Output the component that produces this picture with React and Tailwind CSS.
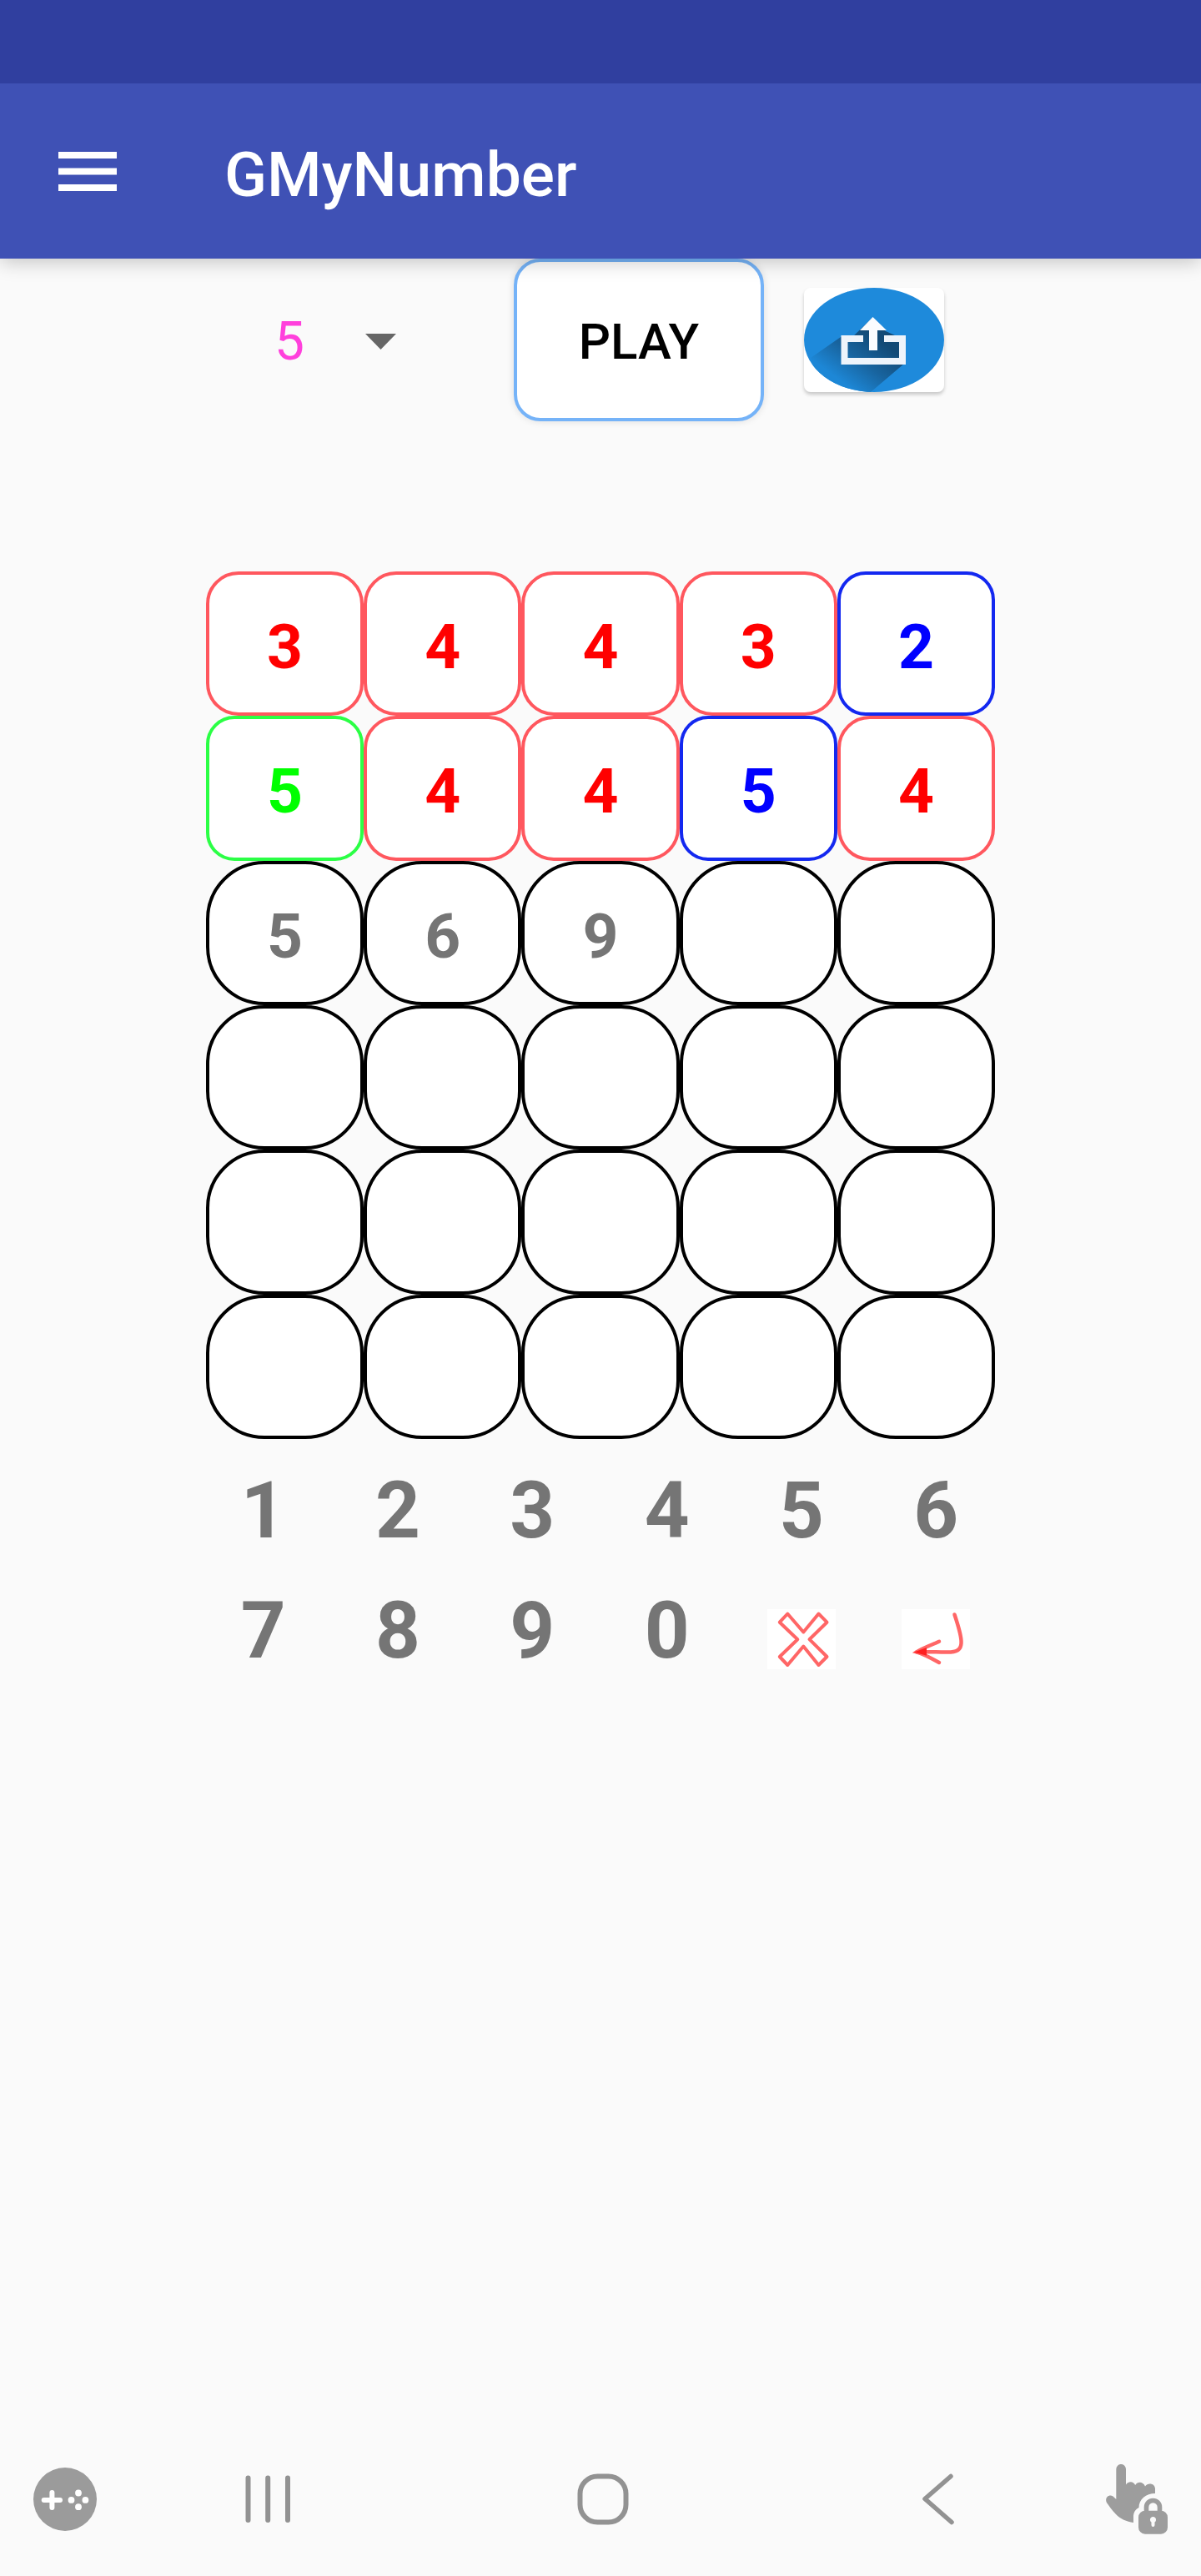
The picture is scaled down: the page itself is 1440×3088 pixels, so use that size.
import { useState } from "react";

const CELL_STYLES = {
  miss: "border-[#ff575e] text-[#ff0000] rounded-[39px]",
  near: "border-[#1328f0] text-[#0000ff] rounded-[34px]",
  hit: "border-[#2bff45] text-[#00ff00] rounded-[34px]",
  open: "border-black text-[#757575] rounded-[70px]",
};

const PLAYED = [
  [["3", "miss"], ["4", "miss"], ["4", "miss"], ["3", "miss"], ["2", "near"]],
  [["5", "hit"], ["4", "miss"], ["4", "miss"], ["5", "near"], ["4", "miss"]],
];

const DIGITS = ["1", "2", "3", "4", "5", "6", "7", "8", "9", "0"];
const ROWS = 6;
const COLS = 5;

function MenuIcon() {
  return (
    <svg width="70" height="47" viewBox="0 0 70 47" fill="currentColor">
      <rect width="70" height="8" />
      <rect y="19.5" width="70" height="8" />
      <rect y="39" width="70" height="8" />
    </svg>
  );
}

function ShareIcon() {
  return (
    <svg width="168" height="125" viewBox="0 0 168 125">
      <defs>
        <clipPath id="share-oval">
          <ellipse cx="84" cy="62.5" rx="84" ry="62.5" />
        </clipPath>
        <linearGradient id="share-shade" gradientUnits="userSpaceOnUse" x1="90" y1="62" x2="50" y2="116">
          <stop offset="0" stopColor="#124a76" />
          <stop offset="0.5" stopColor="#18649f" />
          <stop offset="1" stopColor="#1d87d6" />
        </linearGradient>
      </defs>
      <ellipse cx="84" cy="62.5" rx="84" ry="62.5" fill="#1e8adb" />
      <path
        d="M58 59 L82 36 L98 52 L120 62 L120 91 L80 125 L20 125 L8 84 L44 59 Z"
        fill="url(#share-shade)"
        clipPath="url(#share-oval)"
      />
      <path d="M71 61 H48.5 V88 H118 V61 H96" fill="none" stroke="#eef4fb" strokeWidth="8" />
      <path d="M82.5 35 L99 51 H88 V75 H78 V51 H67 Z" fill="#fafcff" />
    </svg>
  );
}

function ClearIcon() {
  return (
    <svg width="82" height="72" viewBox="0 0 82 72" fill="none" stroke="#ff6666" strokeWidth="4">
      <path
        d="M24.3 5.5 L14.8 15.7 L36.3 36.2 L14.8 57 L24.3 67 L43.3 44.5 L61.5 67 L71.5 57 L50.5 36.2 L71.5 15.7 L61.5 5.5 L43.3 27.5 Z"
        strokeLinejoin="round"
      />
    </svg>
  );
}

function EnterIcon() {
  return (
    <svg width="82" height="72" viewBox="0 0 82 72" fill="none" stroke="#ff6666" strokeWidth="4.5" strokeLinecap="round">
      <path d="M63.5 6.5 C67 17 71 29 71.5 38 C72 46 69 51 59 51.5 C46 52 32 50.5 18 51.4" />
      <path d="M45 38.8 C36 43 26 46 18 51.4 C27 54 36 59 45 64" />
      <path d="M18 51.4 L29 47.5 L29 54.5 Z" fill="#ff2020" stroke="#ff2020" strokeWidth="2" />
    </svg>
  );
}

function GamepadIcon() {
  return (
    <svg width="76" height="76" viewBox="0 0 76 76">
      <circle cx="38" cy="38" r="38" fill="#9b9b9b" />
      <path d="M12.7 39 H32 M22.4 30 V48" stroke="#fff" strokeWidth="6" strokeLinecap="round" />
      <g fill="#fff">
        <circle cx="54" cy="30.5" r="3.9" />
        <circle cx="45.5" cy="38.9" r="3.9" />
        <circle cx="62.4" cy="38.9" r="3.9" />
        <circle cx="54" cy="47.2" r="3.9" />
      </g>
    </svg>
  );
}

function TouchLockIcon() {
  return (
    <svg width="74" height="84" viewBox="0 0 74 84" fill="#9d9d9d">
      <path d="M12.3 5.8 A5.85 5.85 0 0 1 24 5.8 V24.5 C27 20 33 20 35.2 25 C38 20.5 44.5 20.5 47 26.5 C50 21.5 59 22.5 59 29.5 V35 C48 35 39.5 42 39.5 52 C35 54.5 33 58 33 63 V70 C25 69 17 65.5 12 60 C7 55 4 50 0.9 46 C-2 40 4 35.5 8.5 38.5 L12.3 42 Z" />
      <path d="M48.5 60 V51.5 A8 8 0 0 1 64.5 51.5 V60" fill="none" stroke="#9d9d9d" strokeWidth="5.6" />
      <path
        fillRule="evenodd"
        d="M47 55.7 H66 A8 8 0 0 1 74 63.7 V75.7 A8 8 0 0 1 66 83.7 H47 A8 8 0 0 1 39 75.7 V63.7 A8 8 0 0 1 47 55.7 Z M54.5 69.5 V73 A2 2 0 0 0 58.5 73 V69.5 A3.6 3.6 0 1 0 54.5 69.5 Z"
      />
    </svg>
  );
}

function Cell({ value, state }) {
  return (
    <div
      className={`flex items-center justify-center border-4 bg-white pt-2 text-[75px] leading-none font-bold ${CELL_STYLES[state]}`}
    >
      {value}
    </div>
  );
}

export default function App() {
  const [length, setLength] = useState("5");
  const [guess, setGuess] = useState(["5", "6", "9"]);

  const addDigit = (digit) => {
    if (guess.length < COLS) setGuess([...guess, digit]);
  };

  // Played rows first, then the current guess, then empty rows
  const cells = [];
  for (let row = 0; row < ROWS; row++) {
    for (let col = 0; col < COLS; col++) {
      if (PLAYED[row]) cells.push(PLAYED[row][col]);
      else cells.push([row === PLAYED.length ? guess[col] : "", "open"]);
    }
  }

  return (
    <div className="flex min-h-screen flex-col bg-[#fafafa] font-['Roboto',sans-serif]">
      {/* App bar */}
      <header className="relative z-10 bg-[#3f51b5] pt-[100px] shadow-[0_4px_22px_rgba(0,0,0,0.22)]">
        <div className="absolute inset-x-0 top-0 h-[100px] bg-[#303f9f]" />
        <div className="flex h-[210px] items-center gap-[129px] pl-[70px] text-white">
          <button type="button" aria-label="Open menu">
            <MenuIcon />
          </button>
          <h1 className="pt-2 text-[75px] leading-none font-medium">GMyNumber</h1>
        </div>
      </header>

      <main className="flex flex-1 flex-col">
        {/* Controls */}
        <div className="flex h-[195px] items-center pl-[329px]">
          <div className="relative mr-[127px]">
            <select
              aria-label="Number of digits"
              value={length}
              onChange={(e) => setLength(e.target.value)}
              className="block h-24 w-40 appearance-none bg-transparent pt-1 text-[64px] leading-none text-[#ff40dc] outline-none"
            >
              <option>3</option>
              <option>4</option>
              <option>5</option>
              <option>6</option>
            </select>
            <svg
              className="pointer-events-none absolute top-10 right-3.5"
              width="37"
              height="19"
              viewBox="0 0 37 19"
            >
              <path d="M0 0 H37 L18.5 19 Z" fill="#666" />
            </svg>
          </div>
          <button
            type="button"
            onClick={() => setGuess([])}
            className="h-full w-[300px] rounded-[32px] border-4 border-[#75b3f8] bg-white pt-1 text-[60px] leading-none font-medium text-black shadow-[0_0_10px_rgba(0,0,0,0.12)]"
          >
            PLAY
          </button>
          <button
            type="button"
            aria-label="Share"
            className="ml-12 rounded-lg bg-white shadow-[0_3px_4px_rgba(0,0,0,0.2)]"
          >
            <ShareIcon />
          </button>
        </div>

        {/* Board */}
        <div className="mt-[180px] grid h-[1040px] grid-cols-5 grid-rows-6 px-[247px]">
          {cells.map(([value, state], i) => (
            <Cell key={i} value={value} state={state} />
          ))}
        </div>

        {/* Keypad */}
        <div className="mt-3 grid auto-rows-[144px] grid-cols-6 pr-[237px] pl-[235px]">
          {DIGITS.map((digit) => (
            <button
              key={digit}
              type="button"
              onClick={() => addDigit(digit)}
              className="pt-1 text-[94px] leading-none font-bold text-[#757575]"
            >
              {digit}
            </button>
          ))}
          <button
            type="button"
            aria-label="Delete"
            onClick={() => setGuess(guess.slice(0, -1))}
            className="flex items-center justify-center pt-6"
          >
            <span className="bg-white">
              <ClearIcon />
            </span>
          </button>
          <button type="button" aria-label="Enter" className="flex items-center justify-center pt-6">
            <span className="bg-white">
              <EnterIcon />
            </span>
          </button>
        </div>
      </main>

      {/* System navigation */}
      <nav className="grid h-[184px] grid-cols-[120px_1fr_1fr_1fr_114px] items-center justify-items-center">
        <button type="button" aria-label="Game tools" className="justify-self-end pr-1">
          <GamepadIcon />
        </button>
        <button type="button" aria-label="Recent apps">
          <svg width="54" height="58" viewBox="0 0 54 58" stroke="#929292" strokeWidth="6" strokeLinecap="round">
            <path d="M3.5 3.5 V54 M27.2 3.5 V54 M51 3.5 V54" />
          </svg>
        </button>
        <button type="button" aria-label="Home">
          <svg width="62" height="62" viewBox="0 0 62 62" fill="none" stroke="#929292" strokeWidth="6">
            <rect x="3.5" y="3.5" width="55" height="55" rx="21" />
          </svg>
        </button>
        <button type="button" aria-label="Back">
          <svg
            width="38"
            height="62"
            viewBox="0 0 38 62"
            fill="none"
            stroke="#929292"
            strokeWidth="5.5"
            strokeLinecap="round"
            strokeLinejoin="round"
          >
            <path d="M34 3.5 L3 30.5 L35 58.5" />
          </svg>
        </button>
        <button type="button" aria-label="Lock touch input" className="justify-self-start">
          <TouchLockIcon />
        </button>
      </nav>
    </div>
  );
}
